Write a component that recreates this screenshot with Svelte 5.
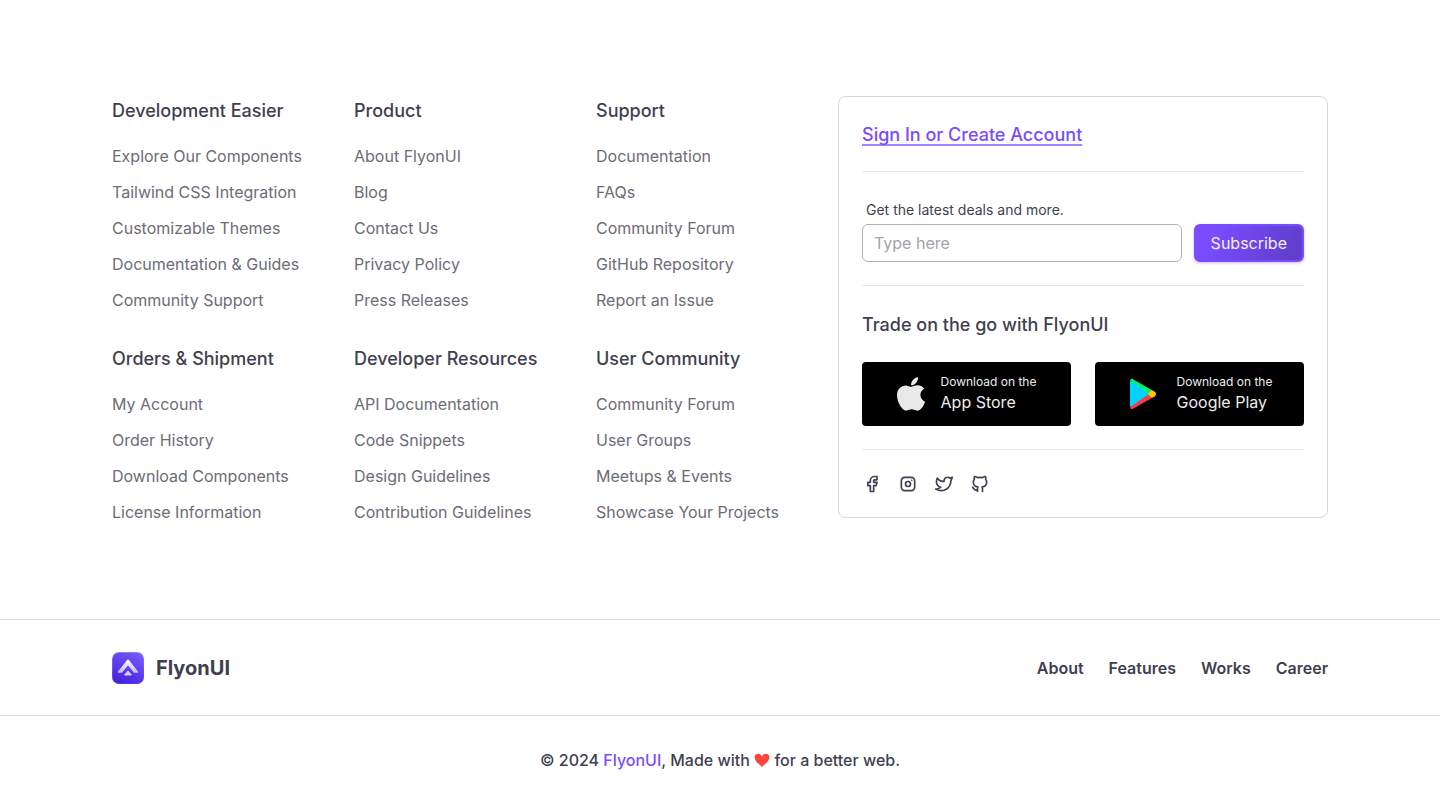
<script>
  const groups = [
    { title: 'Development Easier', links: ['Explore Our Components', 'Tailwind CSS Integration', 'Customizable Themes', 'Documentation & Guides', 'Community Support'] },
    { title: 'Product', links: ['About FlyonUI', 'Blog', 'Contact Us', 'Privacy Policy', 'Press Releases'] },
    { title: 'Support', links: ['Documentation', 'FAQs', 'Community Forum', 'GitHub Repository', 'Report an Issue'] },
    { title: 'Orders & Shipment', links: ['My Account', 'Order History', 'Download Components', 'License Information'] },
    { title: 'Developer Resources', links: ['API Documentation', 'Code Snippets', 'Design Guidelines', 'Contribution Guidelines'] },
    { title: 'User Community', links: ['Community Forum', 'User Groups', 'Meetups & Events', 'Showcase Your Projects'] }
  ];

  const socials = [
    { name: 'Facebook', paths: ['M7 10v4h3v7h4v-7h3l1 -4h-4v-2a1 1 0 0 1 1 -1h3v-4h-3a5 5 0 0 0 -5 5v2h-3'] },
    { name: 'Instagram', paths: ['M4 8a4 4 0 0 1 4 -4h8a4 4 0 0 1 4 4v8a4 4 0 0 1 -4 4h-8a4 4 0 0 1 -4 -4z', 'M9 12a3 3 0 1 0 6 0a3 3 0 0 0 -6 0', 'M16.5 7.5v.01'] },
    { name: 'Twitter', paths: ['M22 4.01c-1 .49 -1.98 .689 -3 .99c-1.121 -1.265 -2.783 -1.335 -4.38 -.737s-2.643 2.06 -2.62 3.737v1c-3.245 .083 -6.135 -1.395 -8 -4c0 0 -4.182 7.433 4 11c-1.872 1.247 -3.739 2.088 -6 2c3.308 1.803 6.913 2.423 10.034 1.517c3.58 -1.04 6.522 -3.723 7.651 -7.742a13.84 13.84 0 0 0 .497 -3.753c0 -.249 1.51 -2.772 1.818 -4.013z'] },
    { name: 'GitHub', paths: ['M9 19c-4.3 1.4 -4.3 -2.5 -6 -3m12 5v-3.5c0 -1 .1 -1.4 -.5 -2c2.8 -.3 5.5 -1.4 5.5 -6a4.6 4.6 0 0 0 -1.3 -3.2a4.2 4.2 0 0 0 -.1 -3.2s-1.1 -.3 -3.5 1.3a12.3 12.3 0 0 0 -6.2 0c-2.4 -1.6 -3.5 -1.3 -3.5 -1.3a4.2 4.2 0 0 0 -.1 3.2a4.6 4.6 0 0 0 -1.3 3.2c0 4.6 2.7 5.7 5.5 6c-.6 .6 -.6 1.2 -.5 2v3.5'] }
  ];

  const pages = ['About', 'Features', 'Works', 'Career'];
</script>

<footer>
  <div class="container main">
    <nav class="groups" aria-label="Footer">
      {#each groups as group}
        <section>
          <h2>{group.title}</h2>
          <ul>
            {#each group.links as link}
              <li><a href="#top">{link}</a></li>
            {/each}
          </ul>
        </section>
      {/each}
    </nav>

    <aside class="card">
      <a class="signin" href="#signin">Sign In or Create Account</a>
      <hr />
      <form onsubmit={(e) => e.preventDefault()}>
        <label for="email">Get the latest deals and more.</label>
        <div class="field">
          <input id="email" type="text" placeholder="Type here" />
          <button type="submit">Subscribe</button>
        </div>
      </form>
      <hr />
      <h2>Trade on the go with FlyonUI</h2>
      <div class="stores">
        <a class="store" href="#app-store">
          <svg width="28" height="34" viewBox="4 32 376 448" fill="#e9e9ea" aria-hidden="true">
            <path d="M318.7 268.7c-.2-36.7 16.4-64.4 50-84.8-18.8-26.9-47.2-41.7-84.7-44.6-35.5-2.8-74.3 20.7-88.5 20.7-15 0-49.4-19.7-76.4-19.7C63.3 141.2 4 184.8 4 273.5q0 39.3 14.4 81.2c12.8 36.7 59 126.7 107.2 125.2 25.2-.6 43-17.9 75.8-17.9 31.8 0 48.3 17.9 76.4 17.9 48.6-.7 90.4-82.5 102.6-119.3-65.2-30.7-61.7-90-61.7-91.9zm-56.6-164.2c27.3-32.4 24.8-61.9 24-72.5-24.1 1.4-52 16.4-67.9 34.9-17.5 19.8-27.8 44.3-25.6 71.9 26.1 2 49.9-11.4 69.5-34.3z" />
          </svg>
          <span class="label"><small>Download on the</small><span>App Store</span></span>
        </a>
        <a class="store" href="#google-play">
          <svg width="34" height="34" viewBox="0 0 34 34" aria-hidden="true">
            <path fill="#00f076" d="M3.200 3.400C3.500 1.900 4.700 1.500 6 2.200L25.200 13.200 21.200 17.500 12 17z" />
            <path fill="#ff3a44" d="M3.200 30.600C3.500 32.100 4.700 32.500 6 31.800L25.200 20.800 21.200 16.500 12 17z" />
            <path fill="#00d2ff" d="M3 5C3 4.200 3.400 4 4 4.400L21.400 16.600Q21.800 17 21.400 17.400L4 29.600C3.400 30 3 29.800 3 29z" />
            <path fill="#ffc900" d="M24.800 13l3 1.800c1.600 1 1.600 3.400 0 4.400l-3 1.800L20.800 17z" />
          </svg>
          <span class="label"><small>Download on the</small><span>Google Play</span></span>
        </a>
      </div>
      <hr />
      <div class="socials">
        {#each socials as social}
          <a href="#social" aria-label={social.name}>
            <svg width="20" height="20" viewBox="0 0 24 24" fill="none" stroke="currentColor" stroke-width="2" stroke-linecap="round" stroke-linejoin="round" aria-hidden="true">
              {#each social.paths as d}<path {d} />{/each}
            </svg>
          </a>
        {/each}
      </div>
    </aside>
  </div>

  <div class="brandbar">
    <div class="container bar">
      <a class="brand" href="#home">
        <svg width="32" height="32" viewBox="0 0 32 32" aria-hidden="true">
          <defs>
            <linearGradient id="tile" x1="0.8" y1="0" x2="0.3" y2="1">
              <stop offset="0" stop-color="#7658fa" />
              <stop offset="1" stop-color="#4723e0" />
            </linearGradient>
            <linearGradient id="rim" x1="0.5" y1="0" x2="0.5" y2="1">
              <stop offset="0" stop-color="#9079ff" />
              <stop offset="1" stop-color="#5331e6" />
            </linearGradient>
            <linearGradient id="mark" x1="0" y1="0" x2="0" y2="1">
              <stop offset="0" stop-color="#ffffff" />
              <stop offset="1" stop-color="#c3b6f7" />
            </linearGradient>
          </defs>
          <rect width="32" height="32" rx="7" fill="url(#rim)" />
          <rect x="1" y="1" width="30" height="30" rx="6" fill="url(#tile)" />
          <path fill="url(#mark)" d="M15.200 8Q16 7.200 16.800 8L26.200 19.800Q26.600 20.800 25.500 20.800H22.700Q22.100 20.800 21.600 20.200L16 13.400 10.400 20.200Q9.900 20.800 9.300 20.800H6.500Q5.400 20.800 5.800 19.800Z" />
          <path fill="#d5ccfa" d="M15.300 18.900Q16 18.300 16.700 18.900L19.600 22.500Q19.900 23.600 18.900 23.600H13.100Q12.100 23.600 12.400 22.500Z" />
        </svg>
        <span>FlyonUI</span>
      </a>
      <nav class="pages" aria-label="Pages">
        {#each pages as page}<a href="#page">{page}</a>{/each}
      </nav>
    </div>
  </div>

  <p class="copyright">
    © 2024 <a href="#home">FlyonUI</a>, Made with
    <svg width="16" height="16" viewBox="0 0 16 16" fill="#ff4340" role="img" aria-label="love">
      <path d="M8 15C6.200 12.600.6 9.400.6 5.400.6 3.200 2.200 1.700 4.200 1.700 6.100 1.700 7.500 2.900 8 4.700 8.500 2.900 9.900 1.700 11.800 1.700c2 0 3.600 1.500 3.600 3.700C15.400 9.400 9.800 12.600 8 15z" />
    </svg>
    for a better web.
  </p>
</footer>

<style>
  :global(body) {
    margin: 0;
    background: #fff;
  }
  footer {
    --ink: #413f4f;
    --muted: #6d6c77;
    --line: #d8d8da;
    --primary: #794dff;
    color: var(--ink);
    font: 400 16px/24px Inter, sans-serif;
  }
  a {
    color: inherit;
    text-decoration: none;
  }
  .container {
    box-sizing: border-box;
    max-width: 1280px;
    margin: 0 auto;
    padding: 0 32px;
  }
  .main {
    display: grid;
    grid-template-columns: minmax(0, 702fr) minmax(0, 490fr);
    align-items: start;
    gap: 24px;
    padding-top: 96px;
    padding-bottom: 95px;
  }
  .groups {
    display: grid;
    grid-template-columns: repeat(3, minmax(0, 1fr));
    gap: 32px 24px;
  }
  h2 {
    margin: 0;
    font-size: 18px;
    line-height: 30px;
    font-weight: 500;
  }
  ul {
    display: grid;
    gap: 12px;
    margin: 18px 0 0;
    padding: 0;
    list-style: none;
  }
  li {
    color: var(--muted);
    white-space: nowrap;
  }
  .card {
    padding: 23px;
    border: 1px solid var(--line);
    border-radius: 8px;
  }
  .signin {
    display: inline-block;
    color: var(--primary);
    font-size: 18px;
    line-height: 30px;
    font-weight: 500;
    text-decoration: underline 2px #a283ff;
    text-decoration-skip-ink: none;
    text-underline-offset: 3px;
  }
  hr {
    height: 1px;
    margin: 23px 0 24px;
    border: 0;
    background: #e9e9eb;
  }
  .signin + hr {
    margin-top: 21px;
  }
  label {
    display: block;
    padding: 4px;
    font-size: 14px;
    line-height: 20px;
  }
  .field {
    display: flex;
    gap: 12px;
  }
  input,
  button {
    box-sizing: border-box;
    height: 38px;
    border-radius: 6px;
    font: inherit;
  }
  input {
    flex: 1;
    min-width: 0;
    padding: 0 11px;
    border: 1px solid #b2b1b8;
    background: #fff;
    color: var(--ink);
  }
  input::placeholder {
    color: #a3a2a9;
    opacity: 1;
  }
  button {
    padding: 0 15px;
    border: 2px solid var(--primary);
    background: linear-gradient(115deg, #794dff 15%, #613ecc 90%) padding-box, var(--primary);
    box-shadow: 0 1px 3px #794dff66;
    color: #f3efff;
  }
  .stores {
    display: flex;
    gap: 24px;
    margin-top: 22px;
  }
  .store {
    display: flex;
    flex: 1;
    align-items: center;
    justify-content: center;
    gap: 16px;
    height: 64px;
    border-radius: 4px;
    background: #000;
    color: #ececee;
  }
  .label {
    display: grid;
  }
  small {
    font-size: 12px;
    line-height: 16px;
  }
  .socials {
    display: flex;
    gap: 16px;
  }
  .socials a,
  .socials svg {
    display: block;
  }
  .brandbar {
    border-top: 1px solid var(--line);
    border-bottom: 1px solid var(--line);
  }
  .bar {
    display: flex;
    align-items: center;
    justify-content: space-between;
    padding-top: 32px;
    padding-bottom: 31px;
  }
  .brand {
    display: flex;
    align-items: center;
    gap: 12px;
    font-size: 20px;
    line-height: 32px;
    font-weight: 700;
  }
  .pages {
    display: flex;
    gap: 25px;
    font-weight: 600;
  }
  .copyright {
    margin: 0;
    padding: 32px;
    font-weight: 500;
    text-align: center;
  }
  .copyright a {
    color: var(--primary);
  }
  .copyright svg {
    vertical-align: -2px;
  }
</style>
